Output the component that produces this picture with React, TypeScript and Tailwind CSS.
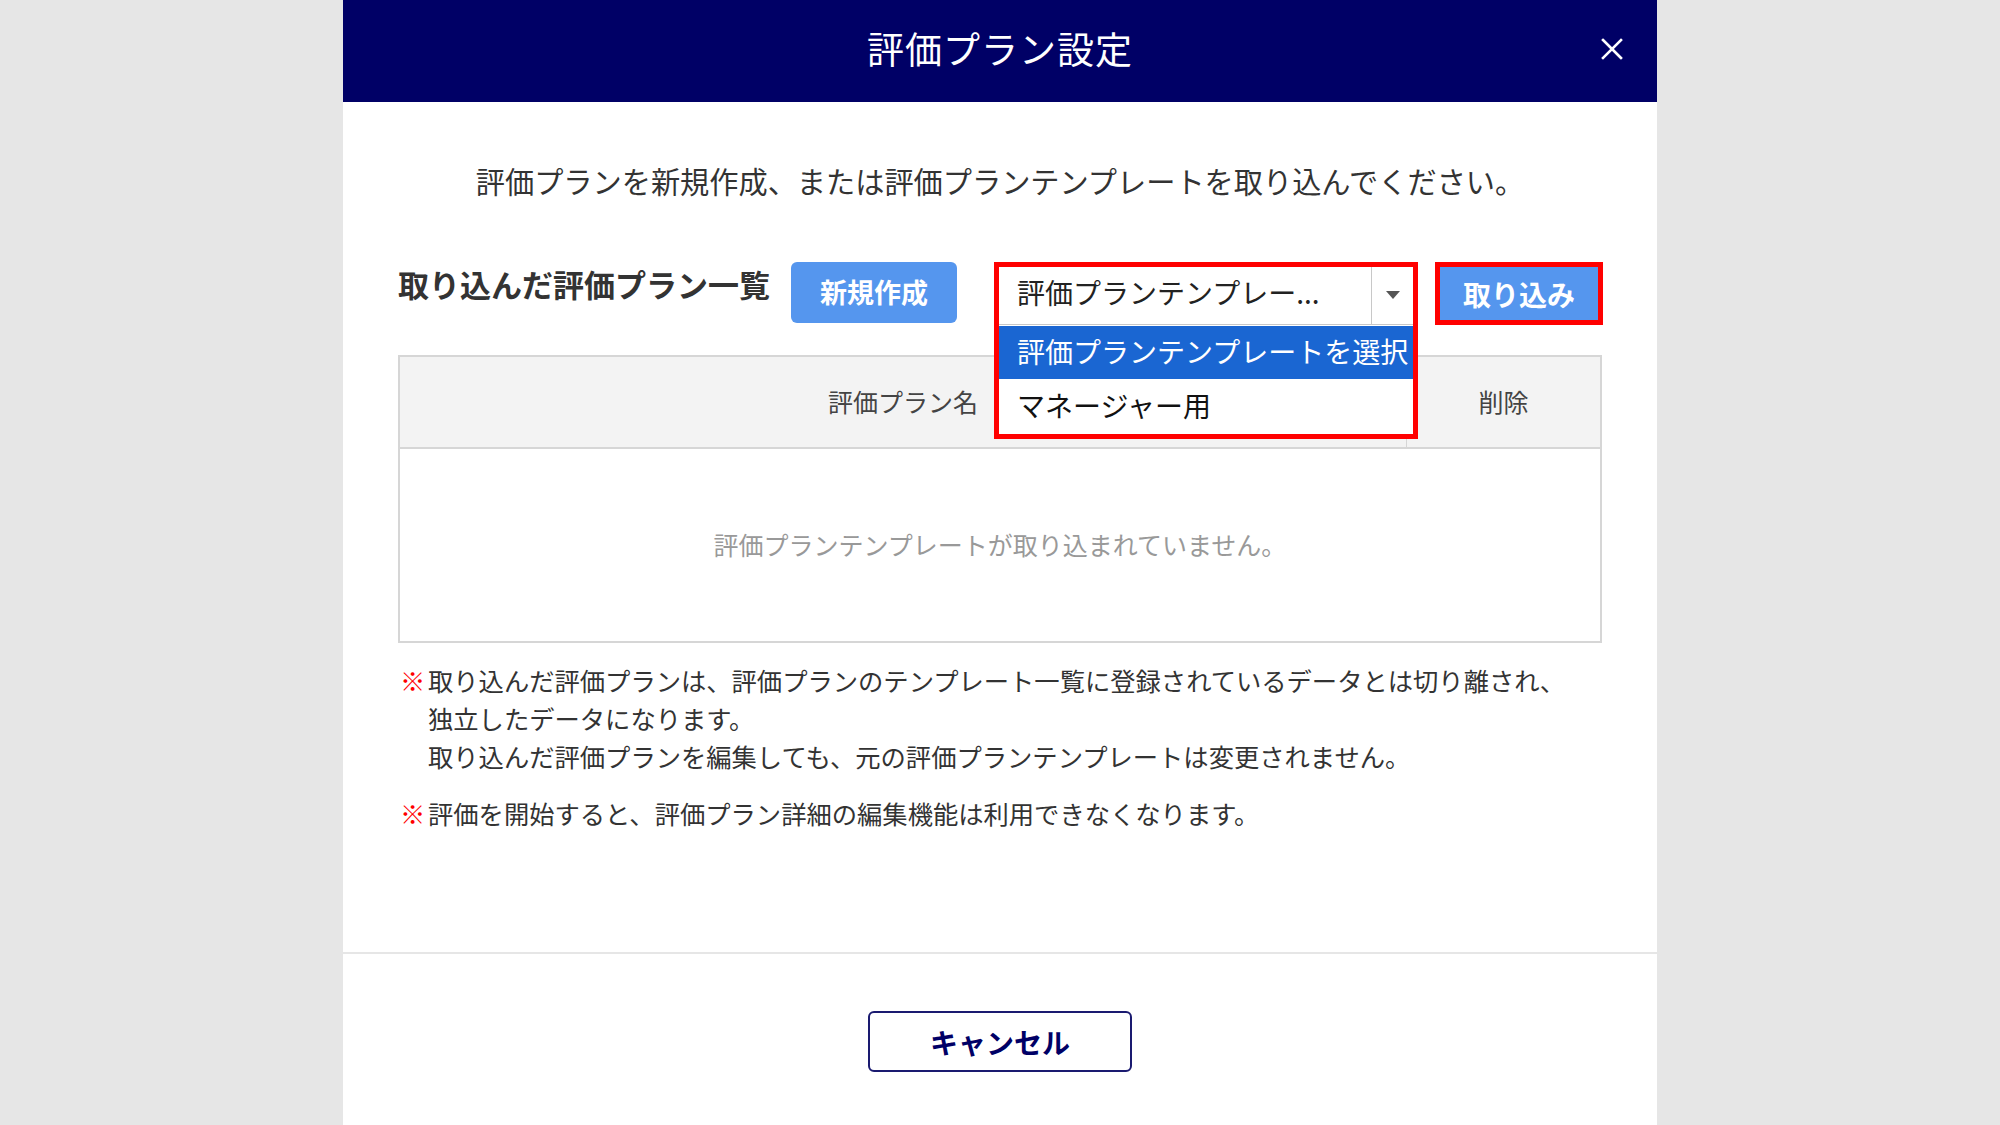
import React from 'react';

const notes = [
  [
    '取り込んだ評価プランは、評価プランのテンプレート一覧に登録されているデータとは切り離され、',
    '独立したデータになります。',
    '取り込んだ評価プランを編集しても、元の評価プランテンプレートは変更されません。',
  ],
  ['評価を開始すると、評価プラン詳細の編集機能は利用できなくなります。'],
];

function CloseIcon() {
  return (
    <svg width="24" height="24" viewBox="0 0 24 24" fill="none" stroke="white" strokeWidth="2.6" strokeLinecap="square">
      <path d="M3 3 L21 21 M21 3 L3 21" />
    </svg>
  );
}

export default function App() {
  return (
    <div className="min-h-screen bg-[#e6e6e6] flex justify-center font-['Noto_Sans_CJK_JP','Noto_Sans',sans-serif] text-[#333]">
      <div className="w-[1314px] h-[1125px] bg-white flex flex-col overflow-hidden">
        {/* header */}
        <div className="relative h-[102px] shrink-0 bg-[#000066] flex items-center justify-center">
          <h1 className="text-white text-[37px] font-normal leading-none tracking-[1px] pb-[5px]">評価プラン設定</h1>
          <button className="absolute right-[33px] top-[37px]">
            <CloseIcon />
          </button>
        </div>

        {/* body */}
        <div className="px-[55px] pt-[58px] pb-[120px] border-b-2 border-[#e6e6e6]">
          <p className="text-center text-[29.2px] leading-[40px]">
            評価プランを新規作成、または評価プランテンプレートを取り込んでください。
          </p>

          <div className="mt-[62px] flex items-start justify-between">
            <div className="flex items-start gap-[21px]">
              <h2 className="text-[31px] font-bold leading-[40px] pt-[2px] text-[#333]">取り込んだ評価プラン一覧</h2>
              <button className="w-[166px] h-[61px] rounded-[6px] bg-[#5596ee] text-white text-[27px] font-bold">
                新規作成
              </button>
            </div>

            <div className="flex items-start gap-[17px] -mr-[1px]">
              <div className="relative w-[424px]">
                <div className="h-[63px] border-[5px] border-b-0 border-[#ff0000] bg-white">
                  <div className="h-full flex border-b border-[#c8c8c8]">
                    <div className="flex-1 flex items-center pl-[18px] pb-[7px] text-[28px] text-[#222] leading-none">
                      評価プランテンプレー...
                    </div>
                    <div className="w-[42px] border-l border-[#c8c8c8] flex items-center justify-center pb-[2px]">
                      <svg width="14" height="8" viewBox="0 0 14 8">
                        <path d="M0 0 L14 0 L7 8 Z" fill="#555" />
                      </svg>
                    </div>
                  </div>
                </div>
                <div className="absolute left-0 right-0 top-full z-10 border-[5px] border-t-0 border-[#ff0000] bg-white">
                  <div className="h-[53px] mt-[1px] pb-[4px] bg-[#1a66d2] text-white text-[28px] flex items-center pl-[18px] whitespace-nowrap">
                    評価プランテンプレートを選択
                  </div>
                  <div className="h-[55px] pb-[4px] text-[#111] text-[28px] flex items-center pl-[18px]">
                    マネージャー用
                  </div>
                </div>
              </div>
              <div className="border-[5px] border-[#ff0000]">
                <button className="w-[158px] h-[53px] bg-[#5596ee] text-white text-[28px] font-bold">取り込み</button>
              </div>
            </div>
          </div>

          {/* table */}
          <div className="mt-[30px] border-2 border-[#d6d6d6]">
            <div className="h-[92px] bg-[#f3f3f3] border-b-2 border-[#d6d6d6] flex text-[25px] text-[#444]">
              <div className="flex-1 flex items-center justify-center border-r border-[#d6d6d6]">評価プラン名</div>
              <div className="w-[193px] flex items-center justify-center">削除</div>
            </div>
            <div className="h-[192px] flex items-center justify-center text-[25px] text-[#999]">
              評価プランテンプレートが取り込まれていません。
            </div>
          </div>

          {/* notes */}
          <div className="mt-[18px] flex flex-col gap-[19px] text-[25.3px] leading-[38px]">
            {notes.map((lines, i) => (
              <div key={i} className="flex">
                <span className="w-[30px] shrink-0 text-[#ff0000] pl-[2px]">※</span>
                <div>
                  {lines.map((l) => (
                    <p key={l}>{l}</p>
                  ))}
                </div>
              </div>
            ))}
          </div>
        </div>

        {/* footer */}
        <div className="flex justify-center pt-[57px]">
          <button className="w-[264px] h-[61px] rounded-[6px] border-2 border-[#1a1a70] bg-white text-[#000066] text-[28px] font-bold">
            キャンセル
          </button>
        </div>
      </div>
    </div>
  );
}
